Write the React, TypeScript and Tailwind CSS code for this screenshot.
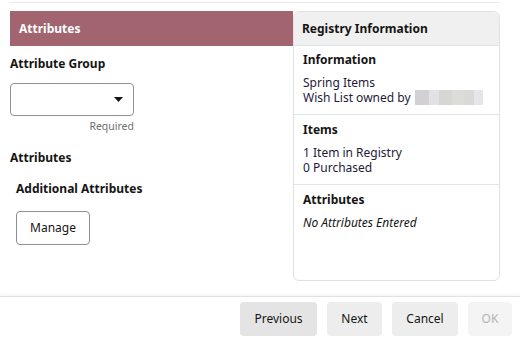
import React from 'react';

const font = { fontFamily: '"Noto Sans", "Open Sans", sans-serif' };

function InfoSection({
  title,
  children,
  first,
}: {
  title: string;
  children: React.ReactNode;
  first?: boolean;
}) {
  return (
    <div className={`px-[9px] ${first ? 'pt-[6px]' : 'pt-[7px]'} pb-[9px] border-b border-[#e1e4e8]`}>
      <div className="text-[12px] font-bold leading-[16px] text-[#161513]">{title}</div>
      <div className="mt-[7px] text-[12px] leading-[15px] text-[#1d1b36]">{children}</div>
    </div>
  );
}

function FooterButton({
  label,
  tone,
  width,
}: {
  label: string;
  tone: 'dark' | 'light' | 'off';
  width: string;
}) {
  const styles = {
    dark: 'bg-[#e4e4e4] text-[#161513]',
    light: 'bg-[#ededed] text-[#161513]',
    off: 'bg-[#f4f4f4] text-[#b3b3b3]',
  };
  return (
    <button
      type="button"
      className={`h-[34px] ${width} rounded-[4px] text-[12px] ${styles[tone]}`}
    >
      {label}
    </button>
  );
}

export default function App() {
  return (
    <div className="w-[520px] h-[342px] bg-white flex flex-col overflow-hidden" style={font}>
      <div className="h-[296px] px-[10px] pt-[2px]">
        <div className="border-t border-[#e8e8e8] w-[490px] pt-[8px] flex">
          {/* left column */}
          <div className="w-[283px] flex flex-col">
            <div className="h-[35px] bg-[#a2656f] flex items-center pl-[9px]">
              <span className="text-[12px] font-bold text-white">Attributes</span>
            </div>
            <div className="mt-[10px] text-[12px] font-bold leading-[16px] text-[#161513]">
              Attribute Group
            </div>
            <div className="mt-[11px] w-[124px] h-[33px] border border-[#8f8f8f] rounded-[4px] flex items-center justify-end pr-[10px]">
              <svg width="9" height="5" viewBox="0 0 9 5">
                <path d="M0 0 L9 0 L4.5 5 Z" fill="#161513" />
              </svg>
            </div>
            <div className="mt-[3px] w-[124px] text-right text-[10.5px] leading-[14px] text-[#6f6f6f]">
              Required
            </div>
            <div className="mt-[17px] text-[12px] font-bold leading-[16px] text-[#161513]">
              Attributes
            </div>
            <div className="mt-[15px] pl-[6px] text-[12px] font-bold leading-[16px] text-[#161513]">
              Additional Attributes
            </div>
            <div className="mt-[14px] pl-[6px]">
              <button
                type="button"
                className="w-[74px] h-[34px] border border-[#8f8f8f] rounded-[4px] bg-white text-[12px] text-[#161513]"
              >
                Manage
              </button>
            </div>
          </div>

          {/* right column */}
          <div className="w-[207px] h-[270px] border border-[#e1e1e1] rounded-[6px] overflow-hidden flex flex-col">
            <div className="h-[34px] bg-[#f0f0f0] border-b border-[#e1e4e8] flex items-center pl-[8px]">
              <span className="text-[12px] font-bold text-[#161513]">Registry Information</span>
            </div>
            <InfoSection title="Information" first>
              <div>Spring Items</div>
              <div className="flex items-center">
                <span>Wish List owned by</span>
                <span className="ml-[4px] inline-flex h-[15px] w-[68px]">
                  <span className="w-[14px] bg-[#d3d0d3]" />
                  <span className="w-[10px] bg-[#e2e1e3]" />
                  <span className="w-[13px] bg-[#d6d6d2]" />
                  <span className="w-[12px] bg-[#dcdcd8]" />
                  <span className="w-[10px] bg-[#d9dad6]" />
                  <span className="w-[9px] bg-[#e6e5ea]" />
                </span>
              </div>
            </InfoSection>
            <InfoSection title="Items">
              <div>1 Item in Registry</div>
              <div>0 Purchased</div>
            </InfoSection>
            <div className="px-[9px] pt-[7px]">
              <div className="text-[12px] font-bold leading-[16px] text-[#161513]">Attributes</div>
              <div className="mt-[7px] text-[12px] leading-[15px] italic text-[#161513]">
                No Attributes Entered
              </div>
            </div>
          </div>
        </div>
      </div>

      <div className="flex-1 border-t border-[#e2e2e2] shadow-[0_-2px_3px_rgba(0,0,0,0.04)] flex justify-end items-start pt-[5px] pr-[8px] gap-[10px]">
        <FooterButton label="Previous" tone="dark" width="w-[77px]" />
        <FooterButton label="Next" tone="light" width="w-[55px]" />
        <FooterButton label="Cancel" tone="light" width="w-[66px]" />
        <FooterButton label="OK" tone="off" width="w-[44px]" />
      </div>
    </div>
  );
}
